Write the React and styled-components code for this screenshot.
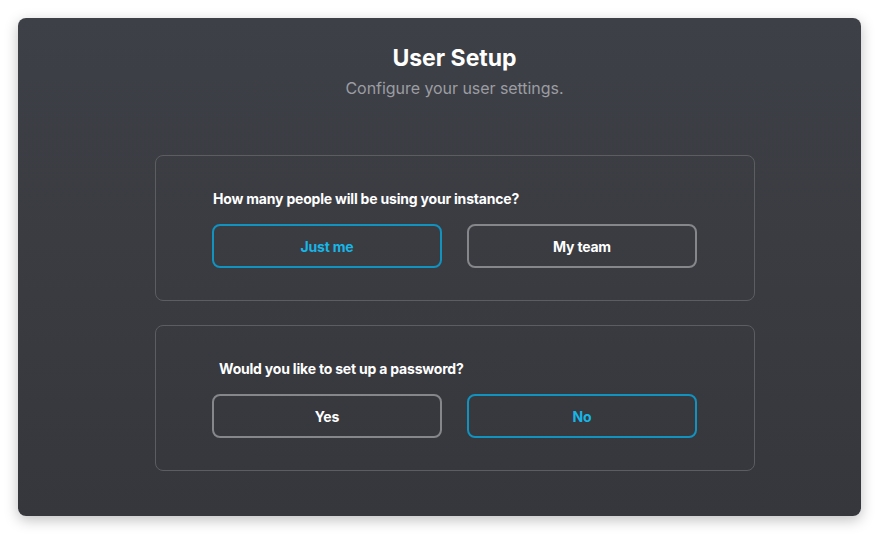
import React, { useState } from 'react'
import styled, { createGlobalStyle } from 'styled-components'

const GlobalStyle = createGlobalStyle`
  html, body {
    margin: 0;
    padding: 0;
    background: #ffffff;
    font-family: Inter, "Noto Sans", sans-serif;
  }
`

const Page = styled.div`
  padding: 18px;
  width: 879px;
  height: 534px;
  box-sizing: border-box;
`

const Panel = styled.div`
  width: 843px;
  height: 498px;
  box-sizing: border-box;
  border-radius: 8px;
  background: linear-gradient(180deg, #3e4047 0%, #35373c 100%);
  box-shadow: 0 4px 14px rgba(0, 0, 0, 0.25);
  display: flex;
  flex-direction: column;
  align-items: center;
  padding: 26px 0 0 30px;
`

const Title = styled.h1`
  margin: 0;
  color: #ffffff;
  font-size: 23px;
  font-weight: 700;
  letter-spacing: 0;
  line-height: 28px;
`

const Subtitle = styled.p`
  margin: 6px 0 0;
  color: #9b9da3;
  font-size: 16px;
  letter-spacing: -0.05px;
  line-height: 20px;
`

const Sections = styled.div`
  margin-top: 57px;
  display: flex;
  flex-direction: column;
  gap: 24px;
`

const Section = styled.div`
  width: 600px;
  height: 146px;
  box-sizing: border-box;
  border: 1px solid #5b5d63;
  border-radius: 8px;
  display: flex;
  flex-direction: column;
  align-items: center;
  padding-top: 33px;
`

const Question = styled.div`
  width: 483px;
  box-sizing: border-box;
  padding-left: ${({ indent }) => indent || 0}px;
  color: #ffffff;
  font-size: 14px;
  font-weight: 700;
  letter-spacing: -0.2px;
  line-height: 20px;
`

const Options = styled.div`
  margin-top: 15px;
  display: flex;
  gap: 25px;
`

const Option = styled.button`
  width: 230px;
  height: 44px;
  box-sizing: border-box;
  border-radius: 8px;
  background: transparent;
  border: 2px solid ${({ active }) => (active ? '#1192bf' : '#85878b')};
  color: ${({ active }) => (active ? '#17b6e6' : '#ffffff')};
  font-family: inherit;
  font-size: 14px;
  font-weight: 700;
  letter-spacing: -0.2px;
  cursor: pointer;
`

export default function App() {
  const [users, setUsers] = useState('single')
  const [password, setPassword] = useState('no')

  return (
    <>
      <GlobalStyle />
      <Page>
        <Panel>
          <Title>User Setup</Title>
          <Subtitle>Configure your user settings.</Subtitle>
          <Sections>
            <Section>
              <Question>How many people will be using your instance?</Question>
              <Options>
                <Option active={users === 'single'} onClick={() => setUsers('single')}>Just me</Option>
                <Option active={users === 'team'} onClick={() => setUsers('team')}>My team</Option>
              </Options>
            </Section>
            <Section>
              <Question indent={6}>Would you like to set up a password?</Question>
              <Options>
                <Option active={password === 'yes'} onClick={() => setPassword('yes')}>Yes</Option>
                <Option active={password === 'no'} onClick={() => setPassword('no')}>No</Option>
              </Options>
            </Section>
          </Sections>
        </Panel>
      </Page>
    </>
  )
}
